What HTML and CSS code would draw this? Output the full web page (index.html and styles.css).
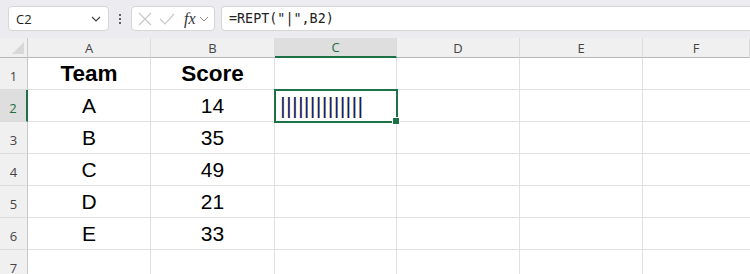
FILE: index.html
```html
<!DOCTYPE html>
<html>
<head>
<meta charset="utf-8">
<link rel="stylesheet" href="styles.css">
</head>
<body>
<div class="toolbar">
  <div class="namebox">
    <span class="nb-text">C2</span>
    <svg class="chev" width="10" height="6" viewBox="0 0 10 6"><path d="M1 1 L5 5 L9 1" fill="none" stroke="#444" stroke-width="1.2"/></svg>
  </div>
  <div class="dots"><span></span><span></span><span></span></div>
  <div class="fxbox">
    <svg width="14" height="14" viewBox="0 0 14 14"><path d="M1 1 L13 13 M13 1 L1 13" stroke="#c8c8c8" stroke-width="1.2" fill="none"/></svg>
    <svg width="16" height="14" viewBox="0 0 16 14"><path d="M1 7 L6 12 L15 2" stroke="#c8c8c8" stroke-width="1.2" fill="none"/></svg>
    <span class="fx">fx</span>
    <svg width="10" height="6" viewBox="0 0 10 6"><path d="M1 1 L5 5 L9 1" fill="none" stroke="#888" stroke-width="1"/></svg>
  </div>
  <div class="formula">=REPT("|",B2)</div>
</div>
<div class="sheet">
  <div class="corner"><span class="tri"></span></div>
  <div class="ch">A</div><div class="ch">B</div><div class="ch sel">C</div><div class="ch">D</div><div class="ch">E</div><div class="ch last">F</div>

  <div class="rh">1</div><div class="c b">Team</div><div class="c b">Score</div><div class="c"></div><div class="c"></div><div class="c"></div><div class="c last"></div>
  <div class="rh sel">2</div><div class="c">A</div><div class="c">14</div><div class="c active"><span class="bars">||||||||||||||</span></div><div class="c"></div><div class="c"></div><div class="c last"></div>
  <div class="rh">3</div><div class="c">B</div><div class="c">35</div><div class="c"></div><div class="c"></div><div class="c"></div><div class="c last"></div>
  <div class="rh">4</div><div class="c">C</div><div class="c">49</div><div class="c"></div><div class="c"></div><div class="c"></div><div class="c last"></div>
  <div class="rh">5</div><div class="c">D</div><div class="c">21</div><div class="c"></div><div class="c"></div><div class="c"></div><div class="c last"></div>
  <div class="rh">6</div><div class="c">E</div><div class="c">33</div><div class="c"></div><div class="c"></div><div class="c"></div><div class="c last"></div>
  <div class="rh">7</div><div class="c"></div><div class="c"></div><div class="c"></div><div class="c"></div><div class="c"></div><div class="c last"></div>
</div>
</body>
</html>
```
FILE: styles.css
```css
* { box-sizing: border-box; }
html, body { margin: 0; padding: 0; }
body {
  width: 750px;
  height: 274px;
  overflow: hidden;
  background: #ffffff;
  font-family: "Open Sans", "Noto Sans", sans-serif;
}
.toolbar {
  height: 38px;
  background: #ebebf0;
  display: flex;
  align-items: flex-start;
  padding: 6px 0 0 8px;
}
.namebox {
  width: 101px;
  height: 25px;
  background: #fff;
  border: 1px solid #d6d6d6;
  border-radius: 4px;
  display: flex;
  align-items: center;
  justify-content: space-between;
  padding: 0 7px 0 7px;
}
.nb-text { font-size: 13px; color: #222; }
.dots {
  width: 22px;
  height: 25px;
  display: flex;
  flex-direction: column;
  align-items: center;
  justify-content: center;
  gap: 2px;
}
.dots span { width: 2px; height: 2px; background: #333; border-radius: 1px; }
.fxbox {
  width: 84px;
  height: 25px;
  background: #fff;
  border: 1px solid #d6d6d6;
  border-radius: 4px;
  display: flex;
  align-items: center;
  gap: 7px;
  padding: 0 0 0 6px;
}
.fx {
  font-family: "Liberation Serif", serif;
  font-style: italic;
  font-size: 16px;
  color: #333;
  margin-left: 2px;
  margin-right: -4px;
}
.formula {
  flex: 1;
  margin-left: 6px;
  height: 25px;
  background: #fff;
  border: 1px solid #d6d6d6;
  border-right: none;
  border-radius: 4px 0 0 4px;
  font-family: "DejaVu Sans Mono", monospace;
  font-size: 13.4px;
  color: #222;
  display: flex;
  align-items: center;
  padding-left: 7px;
}
.sheet {
  display: grid;
  grid-template-columns: 28px 123px 124px 122px 123px 123px 107px;
  grid-template-rows: 20px repeat(7, 32px);
}
.corner {
  background: #f0f0f0;
  border-right: 1px solid #c8c8c8;
  border-bottom: 1px solid #b8b8b8;
  position: relative;
}
.tri {
  position: absolute;
  right: 3px;
  bottom: 3px;
  width: 0; height: 0;
  border-left: 12px solid transparent;
  border-bottom: 12px solid #d8d8d8;
}
.ch {
  background: #f0f0f0;
  border-right: 1px solid #dcdcdc;
  border-bottom: 1px solid #b8b8b8;
  font-size: 13px;
  color: #444;
  display: flex;
  align-items: center;
  justify-content: center;
}
.ch.sel {
  background: #dedede;
  border-bottom: 2px solid #1e7145;
  color: #1e6c41;
}
.rh {
  background: #f0f0f0;
  border-right: 1px solid #c8c8c8;
  border-bottom: 1px solid #dcdcdc;
  font-size: 13px;
  color: #444;
  display: flex;
  align-items: center;
  justify-content: center;
  padding-top: 4px;
}
.rh.sel {
  background: #dedede;
  border-right: 2px solid #1e7145;
  color: #1e6c41;
}
.c {
  border-right: 1px solid #e0e0e0;
  border-bottom: 1px solid #e0e0e0;
  font-family: "Liberation Sans", Arial, sans-serif;
  font-size: 21px;
  color: #000;
  display: flex;
  align-items: center;
  justify-content: center;
  padding-top: 1px;
}
.c.b { font-weight: bold; font-size: 22.5px; }
.c.last { border-right: none; }
.c.active {
  justify-content: flex-start;
  padding-left: 5px;
  position: relative;
  outline: 2px solid #1e7145;
  outline-offset: -1px;
}
.c.active::after {
  content: "";
  position: absolute;
  right: -4px;
  bottom: -4px;
  width: 6px;
  height: 6px;
  background: #1e7145;
  border: 1px solid #fff;
}
.bars {
  font-size: 22px;
  color: #1c1c4e;
  letter-spacing: 0.25px;
}
```
